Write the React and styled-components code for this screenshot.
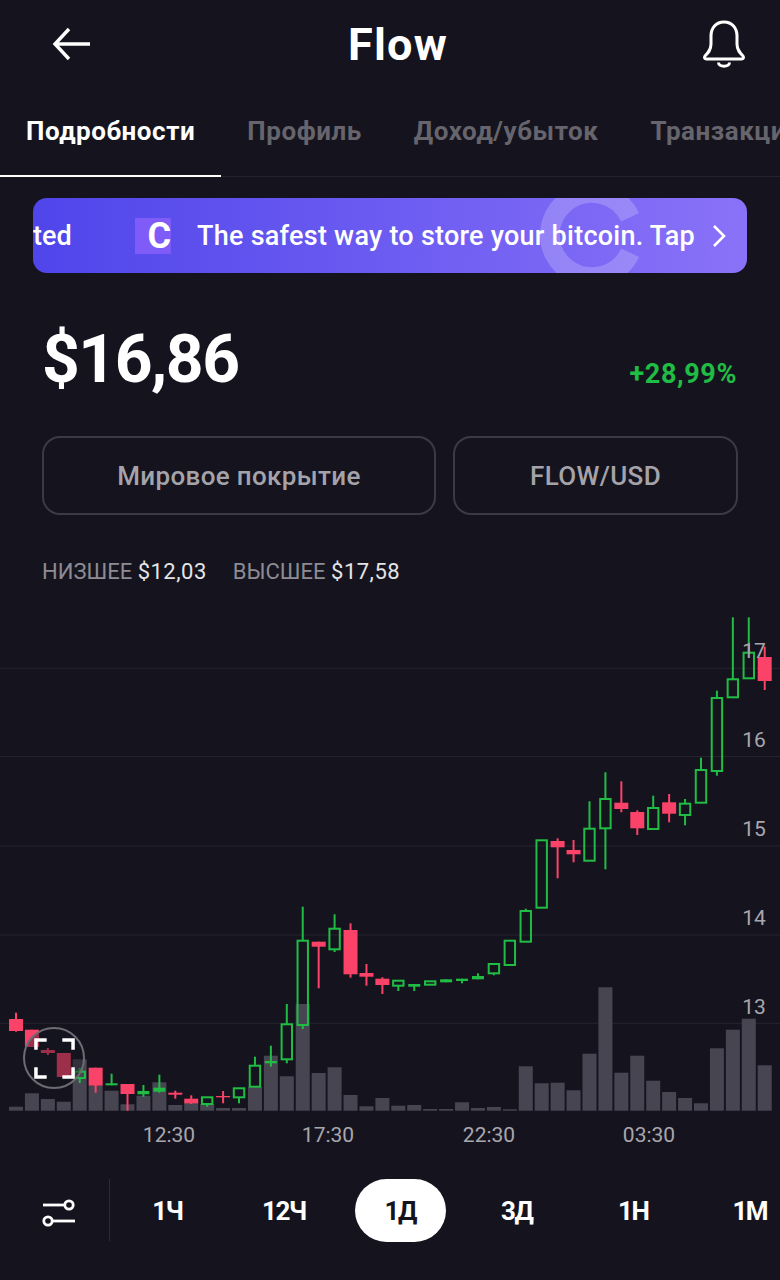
import React from 'react';
import styled, { createGlobalStyle } from 'styled-components';

const GlobalStyle = createGlobalStyle`
  html, body {
    margin: 0;
    background: #15141e;
  }
  * {
    box-sizing: border-box;
  }
`;

const tabs = ['Подробности', 'Профиль', 'Доход/убыток', 'Транзакции'];
const periods = ['1Ч', '12Ч', '1Д', '3Д', '1Н', '1М'];
const gridLines = [668.3, 756.5, 846, 935, 1023.3];
const priceLabels = [
  { y: 650, text: '17' },
  { y: 739, text: '16' },
  { y: 828, text: '15' },
  { y: 917, text: '14' },
  { y: 1006, text: '13' },
];
const timeLabels = [
  { x: 169, text: '12:30' },
  { x: 328, text: '17:30' },
  { x: 489, text: '22:30' },
  { x: 649, text: '03:30' },
];

const volumeTops = [
  1106.7, 1093.3, 1099, 1101.7, 1059.3, 1086, 1090.7, 1104.3, 1095.7, 1082.3, 1105, 1102.7,
  1104, 1108, 1108, 1086.7, 1055.7, 1076.3, 1004, 1073, 1067.3, 1095, 1106.3, 1098,
  1105.7, 1105, 1109, 1109, 1102.3, 1108, 1107, 1109.3, 1066.3, 1083.3, 1082.7, 1090.3,
  1053.7, 987.3, 1072.7, 1055.7, 1080.7, 1092, 1098, 1103.3, 1048.3, 1029.7, 1018.7, 1065.3,
];

// kind, high, body top, body bottom, low
const R = 'red';
const G = 'solid';
const H = 'hollow';
const candles = [
  [R, 1012.7, 1019, 1031, 1031.7],
  [R, 1029.7, 1029.7, 1047, 1047],
  [R, 1048, 1050, 1053, 1055],
  [R, 1053, 1053, 1077, 1077],
  [H, 1068, 1071.7, 1078, 1083],
  [R, 1067.7, 1067.7, 1085.7, 1092.7],
  [G, 1073.7, 1083.3, 1085.3, 1085.3],
  [R, 1084, 1084, 1094, 1110.7],
  [G, 1085, 1091, 1094.3, 1096.7],
  [G, 1074.7, 1087.7, 1091.7, 1092.7],
  [R, 1090.7, 1092.7, 1094.7, 1098.7],
  [R, 1095.3, 1098.7, 1103.3, 1104],
  [H, 1097.3, 1097.3, 1104, 1106.7],
  [R, 1091, 1096, 1097.3, 1103.3],
  [H, 1088.3, 1088.3, 1097.3, 1103.3],
  [H, 1056.7, 1065.7, 1086.7, 1086.7],
  [G, 1045.7, 1061, 1063.3, 1066.7],
  [H, 1004, 1024.3, 1059.3, 1063.3],
  [H, 906.7, 940.7, 1025, 1029],
  [R, 941.7, 941.7, 946.7, 988.3],
  [H, 914.3, 928.7, 949.3, 952],
  [R, 923.3, 930, 974.3, 977.7],
  [R, 964, 973, 976.7, 985.7],
  [R, 977.3, 978.7, 985, 994],
  [H, 980.7, 980.7, 985.7, 991],
  [G, 984, 984, 986.7, 991],
  [H, 981.3, 981.3, 984.7, 984.7],
  [G, 979.3, 979.3, 982.3, 982.3],
  [G, 978.7, 978.7, 981, 983.3],
  [G, 973.3, 976, 979.3, 979.3],
  [H, 964, 964, 973.3, 975.3],
  [H, 940.7, 940.7, 965, 965],
  [H, 908.7, 911, 941.7, 941.7],
  [H, 840.3, 840.3, 907.7, 907.7],
  [R, 838.3, 841, 847.3, 878.3],
  [R, 840, 850, 854.3, 862.3],
  [H, 801.3, 828.7, 860.7, 860.7],
  [H, 772.3, 799, 828.3, 869.3],
  [R, 781.3, 802.7, 809, 812.3],
  [R, 810.3, 812, 828.3, 835],
  [H, 795.7, 808, 829, 829],
  [R, 794, 802.3, 813.7, 822.3],
  [H, 799, 803.7, 815, 825.3],
  [H, 757.7, 770, 802.7, 802.7],
  [H, 690.7, 698, 771, 775.7],
  [H, 617.3, 679.3, 697.3, 697.3],
  [H, 617.3, 652.7, 678.3, 678.3],
  [R, 646.7, 657, 681, 690],
];

const candleX = (i) => 16 + i * 15.93;
const RED = '#fb4268';
const GREEN = '#20bd45';

const Candle = ({ index, data }) => {
  const [kind, high, top, bottom, low] = data;
  const x = candleX(index);
  const colour = kind === R ? RED : GREEN;

  if (kind === H) {
    return (
      <g stroke={colour} strokeWidth="2" fill="none">
        <line x1={x} x2={x} y1={high} y2={top} />
        <line x1={x} x2={x} y1={bottom} y2={low} />
        <rect x={x - 5.2} y={top} width={10.4} height={bottom - top} />
      </g>
    );
  }

  const width = kind === R ? 14 : 12;
  return (
    <g fill={colour}>
      <rect x={x - 1} y={high} width={2} height={low - high} />
      <rect x={x - width / 2} y={top} width={width} height={bottom - top} />
    </g>
  );
};

const App = () => {
  return (
    <Page>
      <GlobalStyle />
      <Header>
        <IconButton aria-label="Назад">
          <svg width="40" height="34" viewBox="0 0 40 34" fill="none" stroke="#fff" strokeWidth="3.4">
            <path d="M38 17H3" />
            <path d="M17 2L3 17l14 15" />
          </svg>
        </IconButton>
        <Title>Flow</Title>
        <IconButton aria-label="Уведомления">
          <svg width="44" height="48" viewBox="0 0 44 48" fill="none" stroke="#fff" strokeWidth="3">
            <path d="M22 2C14 2 9 8 9 16v8c0 6-3 9-6 12-1 1.500-.5 3 1.500 3h35c2 0 2.500-1.500 1.500-3-3-3-6-6-6-12v-8C35 8 30 2 22 2z" strokeLinejoin="round" />
            <path d="M16.500 42.500c0 5 11 5 11 0" />
          </svg>
        </IconButton>
      </Header>

      <TabBar>
        {tabs.map((tab, i) => (
          <Tab key={tab} $active={i === 0}>{tab}</Tab>
        ))}
      </TabBar>

      <Banner>
        <Watermark width="104" height="104" viewBox="0 0 100 100" fill="none">
          <path d="M86.700 32.900A40.500 40.500 0 1 0 86.700 67.100" stroke="rgba(255,255,255,0.2)" strokeWidth="19" />
        </Watermark>
        <BannerEnd>ted</BannerEnd>
        <BannerLogo>C</BannerLogo>
        <BannerText>The safest way to store your bitcoin. Tap</BannerText>
        <BannerArrow>
          <svg width="16" height="24" viewBox="0 0 16 24" fill="none" stroke="#fff" strokeWidth="2.6">
            <path d="M3 2l10 10L3 22" />
          </svg>
        </BannerArrow>
      </Banner>

      <PriceRow>
        <Price>$16,86</Price>
        <Change>+28,99%</Change>
      </PriceRow>

      <Chips>
        <Chip $width={394}>Мировое покрытие</Chip>
        <Chip $width={285}>FLOW/USD</Chip>
      </Chips>

      <Stats>
        <Stat>
          <StatLabel>НИЗШЕЕ</StatLabel> <StatValue>$12,03</StatValue>
        </Stat>
        <Stat>
          <StatLabel>ВЫСШЕЕ</StatLabel> <StatValue>$17,58</StatValue>
        </Stat>
      </Stats>

      <ChartWrap>
        <svg width="780" height="540" viewBox="0 610 780 540" style={{ display: 'block' }}>
          {gridLines.map((y) => (
            <line key={y} x1="0" x2="780" y1={y} y2={y} stroke="#26232e" strokeWidth="1" />
          ))}
          {volumeTops.map((top, i) => (
            <rect key={i} x={candleX(i) - 7} y={top} width="14" height={1110.7 - top} fill="#484552" />
          ))}
          {candles.map((data, i) => (
            <Candle key={i} index={i} data={data} />
          ))}
          {priceLabels.map((label) => (
            <AxisText key={label.text} x="754" y={label.y + 8} textAnchor="middle">{label.text}</AxisText>
          ))}
          {timeLabels.map((label) => (
            <AxisText key={label.text} x={label.x} y="1142" textAnchor="middle">{label.text}</AxisText>
          ))}
        </svg>
        <Fullscreen>
          <svg width="41" height="41" viewBox="0 0 42 42" fill="none" stroke="#fff" strokeWidth="3.6">
            <path d="M2 12V2h11M29 2h11v10M40 30v10H29M13 40H2V30" />
          </svg>
        </Fullscreen>
      </ChartWrap>

      <BottomBar>
        <FilterButton aria-label="Настройки">
          <svg width="34" height="28" viewBox="0 0 34 28" fill="none" stroke="#fff" strokeWidth="2.8">
            <path d="M1 6h22" />
            <circle cx="27" cy="6" r="4.200" />
            <path d="M33 22H11" />
            <circle cx="6" cy="22" r="4.200" />
          </svg>
        </FilterButton>
        <Periods>
          {periods.map((p) => (
            <Period key={p}>
              <PeriodLabel $active={p === '1Д'}>{p}</PeriodLabel>
            </Period>
          ))}
        </Periods>
      </BottomBar>
    </Page>
  );
};

export default App;

const Page = styled.div`
  width: 780px;
  height: 1280px;
  overflow: hidden;
  background: #15141e;
  color: #fff;
  font-family: Roboto, "Noto Sans", sans-serif;
`;

const Header = styled.header`
  height: 88px;
  padding: 0 34px 0 52px;
  display: flex;
  align-items: center;
  justify-content: space-between;
`;

const IconButton = styled.div`
  display: flex;
  align-items: center;
  justify-content: center;
`;

const Title = styled.h1`
  margin: 0 0 0 2px;
  font-size: 45px;
  font-weight: 700;
  letter-spacing: 1.2px;
`;

const TabBar = styled.nav`
  height: 89px;
  display: flex;
  align-items: flex-end;
  border-bottom: 1px solid #25242c;
  white-space: nowrap;
`;

const Tab = styled.div`
  flex: none;
  height: 88px;
  padding: 26px 26px 0;
  margin-bottom: -1px;
  font-size: 26px;
  font-weight: 700;
  letter-spacing: 0.55px;
  line-height: 32px;
  color: ${(p) => (p.$active ? '#fff' : '#66646c')};
  border-bottom: 2px solid ${(p) => (p.$active ? '#fff' : 'transparent')};
`;

const Banner = styled.div`
  position: relative;
  margin: 21px 33px 0;
  height: 75px;
  border-radius: 14px;
  overflow: hidden;
  display: flex;
  align-items: center;
  background: linear-gradient(90deg, #4f45ea 0%, #6f5ef2 55%, #8a72f8 100%);
`;

const Watermark = styled.svg`
  position: absolute;
  left: 507px;
  top: -15px;
`;

const BannerEnd = styled.span`
  position: relative;
  width: 102px;
  font-size: 27px;
  font-weight: 500;
`;

const BannerLogo = styled.span`
  position: relative;
  flex: none;
  width: 36px;
  height: 36px;
  display: flex;
  align-items: center;
  justify-content: flex-end;
  background: #7f5bf8;
  font-size: 36px;
  font-weight: 700;
  line-height: 1;
`;

const BannerText = styled.span`
  position: relative;
  margin-left: 26px;
  font-size: 27px;
  font-weight: 500;
  letter-spacing: 0.25px;
  white-space: nowrap;
`;

const BannerArrow = styled.span`
  position: relative;
  margin-left: 16px;
  display: flex;
`;

const PriceRow = styled.div`
  height: 163px;
  padding: 10px 43px 0 42px;
  display: flex;
  align-items: center;
  justify-content: space-between;
`;

const Price = styled.div`
  font-size: 66px;
  font-weight: 700;
  letter-spacing: -1.5px;
`;

const Change = styled.div`
  margin-top: 28px;
  font-size: 27px;
  font-weight: 700;
  letter-spacing: 0.6px;
  color: ${GREEN};
`;

const Chips = styled.div`
  display: flex;
  gap: 17px;
  padding: 0 42px;
`;

const Chip = styled.div`
  flex: none;
  width: ${(p) => p.$width}px;
  height: 79px;
  display: flex;
  align-items: center;
  justify-content: center;
  border: 2px solid #3c3a44;
  border-radius: 18px;
  font-size: 26px;
  font-weight: 500;
  letter-spacing: 0.35px;
  color: #a5a3aa;
`;

const Stats = styled.div`
  height: 95px;
  padding: 0 42px 26px;
  display: flex;
  align-items: flex-end;
  gap: 26px;
  font-size: 22px;
`;

const Stat = styled.div`
  white-space: pre;
`;

const StatLabel = styled.span`
  color: #8d8b93;
`;

const StatValue = styled.span`
  color: #e4e4e6;
  letter-spacing: 0.5px;
`;

const ChartWrap = styled.div`
  position: relative;
  height: 540px;
`;

const AxisText = styled.text`
  font-size: 21px;
  fill: #a9a7ae;
`;

const Fullscreen = styled.div`
  position: absolute;
  left: 23px;
  top: 417px;
  width: 62px;
  height: 62px;
  display: flex;
  align-items: center;
  justify-content: center;
  border-radius: 50%;
  border: 2px solid #6d6b73;
  background: rgba(21, 20, 30, 0.4);
`;

const BottomBar = styled.div`
  height: 130px;
  padding-top: 29px;
  display: flex;
  align-items: flex-start;
`;

const FilterButton = styled.div`
  flex: none;
  width: 110px;
  height: 62px;
  padding: 20px 0 0 42px;
  border-right: 1px solid #2c2a34;
`;

const Periods = styled.div`
  display: flex;
  margin-left: -1px;
`;

const Period = styled.div`
  flex: none;
  width: 116.5px;
  display: flex;
  justify-content: center;
`;

const PeriodLabel = styled.div`
  width: 91px;
  height: 63px;
  display: flex;
  align-items: center;
  justify-content: center;
  border-radius: 32px;
  font-size: 26px;
  font-weight: 700;
  letter-spacing: -1.5px;
  background: ${(p) => (p.$active ? '#fff' : 'transparent')};
  color: ${(p) => (p.$active ? '#15141e' : '#fff')};
`;
